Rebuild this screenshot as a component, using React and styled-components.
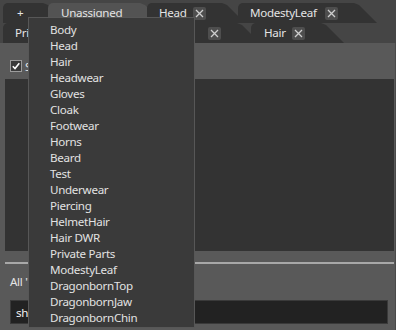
import React from 'react';
import styled, { createGlobalStyle } from 'styled-components';

const GlobalStyle = createGlobalStyle`
  html, body {
    margin: 0;
    padding: 0;
    background: #454545;
  }
  body {
    font-family: 'Noto Sans', 'Open Sans', sans-serif;
    font-size: 11.6px;
    letter-spacing: -0.3px;
  }
`;

const Window = styled.div`
  position: relative;
  width: 396px;
  height: 330px;
  overflow: hidden;
  background: #454545;
  color: #e4e4e4;
  display: flex;
  flex-direction: column;
`;

const TabStrip = styled.div`
  display: flex;
  flex-direction: column;
  padding: 3px 0 0 3px;
`;

const TabRow = styled.div`
  display: flex;
  height: 20px;
`;

const Tab = styled.div`
  flex: none;
  box-sizing: border-box;
  display: flex;
  align-items: center;
  width: ${p => p.$w}px;
  height: 20px;
  margin-left: ${p => -(p.$overlap || 0)}px;
  padding: 0 39px 0 ${p => p.$pad || 12}px;
  background: ${p => (p.$active ? '#535353' : '#333333')};
  border-radius: 5px 0 0 0;
  clip-path: polygon(0 0, calc(100% - 23px) 0, calc(100% - 18px) 2px, 100% 100%, 0 100%);
  white-space: nowrap;
  line-height: 20px;
`;

const Close = styled.span`
  flex: none;
  margin-left: auto;
  width: 13px;
  height: 13px;
  border-radius: 2px;
  background: #4e4e4e;
  display: flex;
  align-items: center;
  justify-content: center;
`;

const Panel = styled.div`
  flex: 1;
  display: flex;
  flex-direction: column;
  background: #595959;
  padding: 0 1px 0 5px;
  border-right: 1px solid #4a4a4a;
`;

const CheckRow = styled.label`
  display: flex;
  align-items: center;
  gap: 3px;
  height: 12px;
  margin: 17px 0 0 5px;
`;

const ListArea = styled.div`
  height: 172px;
  margin-top: 7px;
  background: #333333;
`;

const Separator = styled.div`
  height: 2px;
  margin-top: 11px;
  background: #a8a8a8;
`;

const Caption = styled.div`
  margin: 10px 0 0 5px;
  line-height: 16px;
`;

const SearchBox = styled.div`
  box-sizing: border-box;
  height: 24px;
  margin: 10px 6px 0 5px;
  padding-left: 5px;
  background: #222222;
  border: 1px solid #3a3a3a;
  display: flex;
  align-items: center;
  color: #f2f2f2;
`;

const Menu = styled.ul`
  position: absolute;
  left: 28px;
  top: 17px;
  box-sizing: border-box;
  width: 167px;
  height: 311px;
  margin: 0;
  padding: 4px 0 0 0;
  list-style: none;
  background: #3a3a3a;
  border: 1px solid #575757;
`;

const MenuItem = styled.li`
  height: 16px;
  line-height: 16px;
  padding-left: 21px;
  color: #e2e2e2;
  white-space: nowrap;
`;

function CloseButton() {
  return (
    <Close>
      <svg width="9" height="9" viewBox="0 0 9 9">
        <path d="M1 1 L8 8 M8 1 L1 8" stroke="#cfcfcf" strokeWidth="1.3" />
      </svg>
    </Close>
  );
}

function CheckBox() {
  return (
    <svg width="12" height="12" viewBox="0 0 12 12">
      <rect x="0.5" y="0.5" width="11" height="11" fill="#3a3a3a" stroke="#9c9c9c" />
      <path d="M2.8 6.2 L5 8.5 L9.3 3.2" stroke="#ffffff" strokeWidth="1.6" fill="none" />
    </svg>
  );
}

const items = [
  'Body', 'Head', 'Hair', 'Headwear', 'Gloves', 'Cloak', 'Footwear', 'Horns',
  'Beard', 'Test', 'Underwear', 'Piercing', 'HelmetHair', 'Hair DWR',
  'Private Parts', 'ModestyLeaf', 'DragonbornTop', 'DragonbornJaw', 'DragonbornChin',
];

export default function App() {
  return (
    <Window>
      <GlobalStyle />
      <TabStrip>
        <TabRow>
          <Tab $w={63} $pad={14}>+</Tab>
          <Tab $w={115} $overlap={18} $pad={13} $active>Unassigned</Tab>
          <Tab $w={98} $overlap={16}>Head<CloseButton /></Tab>
          <Tab $w={139} $overlap={7}>ModestyLeaf<CloseButton /></Tab>
        </TabRow>
        <TabRow>
          <Tab $w={130}>Private Parts<CloseButton /></Tab>
          <Tab $w={140} $overlap={13}>Headwear<CloseButton /></Tab>
          <Tab $w={93} $overlap={9} $pad={13}>Hair<CloseButton /></Tab>
        </TabRow>
      </TabStrip>
      <Panel>
        <CheckRow>
          <CheckBox />
          <span>Show all</span>
        </CheckRow>
        <ListArea />
        <Separator />
        <Caption>All 'Unassigned' parts</Caption>
        <SearchBox>shirt</SearchBox>
      </Panel>
      <Menu>
        {items.map(name => (
          <MenuItem key={name}>{name}</MenuItem>
        ))}
      </Menu>
    </Window>
  );
}
